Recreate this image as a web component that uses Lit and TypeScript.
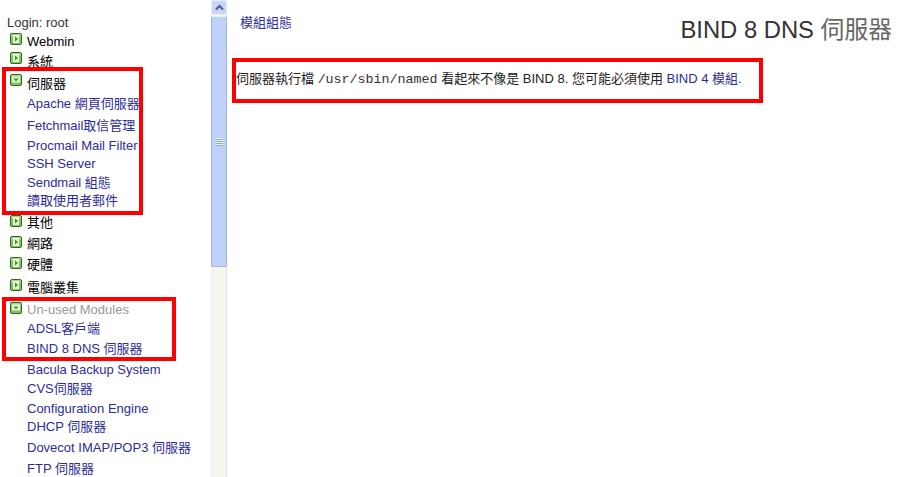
import { LitElement, html, css, svg } from "lit";
import { customElement } from "lit/decorators.js";

type Row = { t: string; h: number; icon?: "closed" | "open"; kind?: "cat" | "link" | "muted"; dy?: number };
const rows: Row[] = [
  { t: "Webmin", h: 20, icon: "closed", kind: "cat", dy: 0 },
  { t: "系統", h: 22, icon: "closed", kind: "cat", dy: -1 },
  { t: "伺服器", h: 20, icon: "open", kind: "cat", dy: -1 },
  { t: "Apache 網頁伺服器", h: 22 },
  { t: "Fetchmail取信管理", h: 20 },
  { t: "Procmail Mail Filter", h: 18 },
  { t: "SSH Server", h: 19 },
  { t: "Sendmail 組態", h: 18 },
  { t: "讀取使用者郵件", h: 22 },
  { t: "其他", h: 21, icon: "closed", kind: "cat", dy: 1 },
  { t: "網路", h: 21, icon: "closed", kind: "cat", dy: 1 },
  { t: "硬體", h: 23, icon: "closed", kind: "cat", dy: 1 },
  { t: "電腦叢集", h: 22, icon: "closed", kind: "cat", dy: 0 },
  { t: "Un-used Modules", h: 19, icon: "open", kind: "muted", dy: 1 },
  { t: "ADSL客戶端", h: 20 },
  { t: "BIND 8 DNS 伺服器", h: 21 },
  { t: "Bacula Backup System", h: 19 },
  { t: "CVS伺服器", h: 20 },
  { t: "Configuration Engine", h: 18 },
  { t: "DHCP 伺服器", h: 21 },
  { t: "Dovecot IMAP/POP3 伺服器", h: 21 },
  { t: "FTP 伺服器", h: 21 },
];

const icon = (k: "closed" | "open", dy: number) => html`<svg class="ico" style="top:${dy}px" width="12" height="12" viewBox="0 0 12 12">
  <rect x="0.5" y="0.5" width="11" height="11" rx="1.5" fill="#7fc65a" stroke="#2f6b22"/>
  <rect x="1.5" y="1.5" width="9" height="2" fill="#c4e8a8"/>
  ${k === "closed"
    ? svg`<rect x="3" y="2" width="6" height="8" fill="#e6f5dc"/><path d="M5 3.5 L8 6 L5 8.5 Z" fill="#3f8a2c"/>`
    : svg`<rect x="2" y="3" width="8" height="5.5" fill="#e6f5dc"/><path d="M3.5 4.5 H8.5 L6 7.5 Z" fill="#3f8a2c"/>`}
</svg>`;

@customElement("app-root")
export class AppRoot extends LitElement {
  static styles = css`
    :host { display: block; width: 920px; height: 477px; overflow: hidden; background: #fff; position: relative;
      font-family: "Liberation Sans", "Noto Sans CJK TC", sans-serif; font-size: 13px; color: #222; }
    .page { display: flex; height: 477px; }
    .side { width: 211px; flex: none; overflow: hidden; padding-top: 15px; box-sizing: border-box; }
    .login { height: 18px; line-height: 16px; padding-left: 7px; font-size: 13px; color: #333; }
    .row { position: relative; padding-left: 27px; white-space: nowrap; line-height: 18px; box-sizing: border-box; }
    .row a { color: #2c2c9c; text-decoration: none; }
    .cat { color: #000; }
    .muted { color: #999; }
    .ico { position: absolute; left: 10px; }
    .track { width: 16px; flex: none; height: 477px; background: #f6f5ee; border-left: 1px solid #f0efe6; border-right: 1px solid #e6e5d8;
      box-sizing: border-box; display: flex; flex-direction: column; align-items: center; }
    .btn { width: 16px; height: 15px; flex: none; background: #c5d5fb; border: 1px solid #e8effe; border-radius: 2px; box-sizing: border-box;
      display: flex; align-items: center; justify-content: center; }
    .thumb { width: 16px; height: 251px; margin-top: 1px; flex: none; background: #c0d2fa; border: 1px solid #9fb4e4; border-top-color: #e8effe;
      border-radius: 2px; box-sizing: border-box; display: flex; align-items: center; justify-content: center; }
    .main { flex: 1; min-width: 0; }
    .head { display: flex; justify-content: space-between; align-items: flex-start; padding: 14px 28px 0 13px; height: 60px; box-sizing: border-box; }
    .head a { color: #2c2c9c; text-decoration: none; line-height: 17px; }
    .title { font-size: 23.8px; line-height: 32px; color: #333; }
    .title span { color: #666; }
    .msg { padding: 10px 0 0 9px; line-height: 18px; white-space: nowrap; color: #222; font-size: 13px; }
    .msg a { color: #2c2c9c; text-decoration: none; }
    .msg code { font-family: "Liberation Mono", monospace; font-size: 13.33px; color: #333; }
    .mark { position: absolute; border: 4px solid #f00; box-sizing: border-box; pointer-events: none; }
    .m1 { left: 2px; top: 67px; width: 141px; height: 148px; }
    .m2 { left: 2px; top: 297px; width: 174px; height: 64px; }
    .m3 { left: 232px; top: 58px; width: 531px; height: 45px; }
  `;

  render() {
    return html`<div class="page">
        <nav class="side">
          <div class="login">Login: root</div>
          ${rows.map(
            (r) => html`<div class="row ${r.kind === "cat" ? "cat" : r.kind === "muted" ? "muted" : ""}" style="height:${r.h}px">
              ${r.icon ? icon(r.icon, r.dy ?? 0) : ""}${r.kind ? r.t : html`<a href="#">${r.t}</a>`}
            </div>`
          )}
        </nav>
        <div class="track">
          <div class="btn"><svg width="9" height="7" viewBox="0 0 9 7"><path d="M1 5.5 L4.5 2 L8 5.5" fill="none" stroke="#4d6185" stroke-width="2"/></svg></div>
          <div class="thumb"><svg width="7" height="8" viewBox="0 0 7 8"><path d="M0 .5H7M0 2.5H7M0 4.5H7M0 6.5H7" stroke="#eef3fe"/><path d="M0 1.5H7M0 3.5H7M0 5.5H7M0 7.5H7" stroke="#8fa8de"/></svg></div>
        </div>
        <main class="main">
          <div class="head"><a href="#">模組組態</a><div class="title">BIND 8 DNS <span>伺服器</span></div></div>
          <div class="msg">伺服器執行檔 <code>/usr/sbin/named</code> 看起來不像是 BIND 8. 您可能必須使用 <a href="#">BIND 4 模組</a>.</div>
        </main>
      </div>
      <div class="mark m1"></div><div class="mark m2"></div><div class="mark m3"></div>`;
  }
}
